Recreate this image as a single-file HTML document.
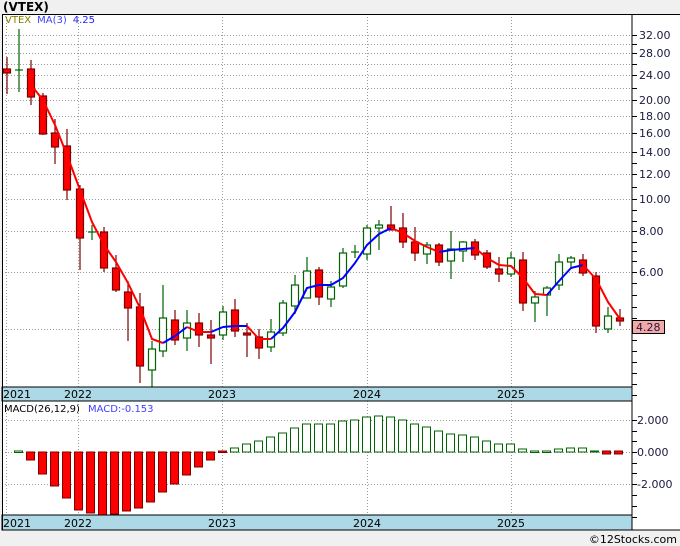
<!DOCTYPE html><html><head><meta charset="utf-8"><style>
body{margin:0;width:680px;height:546px;overflow:hidden;background:#f0f0f0;font-family:"DejaVu Sans","Liberation Sans",sans-serif}
svg{position:absolute;left:0;top:0}
</style></head><body>
<svg width="680" height="546" viewBox="0 0 680 546" xmlns="http://www.w3.org/2000/svg" font-family="DejaVu Sans, Liberation Sans, sans-serif">
<rect x="0" y="0" width="680" height="546" fill="#f0f0f0"/>
<rect x="2" y="14" width="678" height="516" fill="#fff"/>
<text x="3" y="11" font-size="12" font-weight="bold" fill="#000">(VTEX)</text>
<!-- grid main -->
<g stroke="#999" stroke-dasharray="1,2" stroke-width="1">
<line x1="2" y1="35.5" x2="632" y2="35.5"/><line x1="2" y1="44.5" x2="632" y2="44.5"/><line x1="2" y1="53.5" x2="632" y2="53.5"/><line x1="2" y1="64.5" x2="632" y2="64.5"/><line x1="2" y1="75.5" x2="632" y2="75.5"/><line x1="2" y1="88.5" x2="632" y2="88.5"/><line x1="2" y1="100.5" x2="632" y2="100.5"/><line x1="2" y1="116.5" x2="632" y2="116.5"/><line x1="2" y1="133.5" x2="632" y2="133.5"/><line x1="2" y1="152.5" x2="632" y2="152.5"/><line x1="2" y1="174.5" x2="632" y2="174.5"/><line x1="2" y1="199.5" x2="632" y2="199.5"/><line x1="2" y1="231.5" x2="632" y2="231.5"/><line x1="2" y1="272.5" x2="632" y2="272.5"/><line x1="2" y1="329.5" x2="632" y2="329.5"/>
<line x1="6.5" y1="14" x2="6.5" y2="387"/><line x1="78.5" y1="14" x2="78.5" y2="387"/><line x1="222.5" y1="14" x2="222.5" y2="387"/><line x1="367.5" y1="14" x2="367.5" y2="387"/><line x1="511.5" y1="14" x2="511.5" y2="387"/>
<line x1="2" y1="420.5" x2="632" y2="420.5"/><line x1="2" y1="452.5" x2="632" y2="452.5"/><line x1="2" y1="484.5" x2="632" y2="484.5"/>
<line x1="6.5" y1="401" x2="6.5" y2="515"/><line x1="78.5" y1="401" x2="78.5" y2="515"/><line x1="222.5" y1="401" x2="222.5" y2="515"/><line x1="367.5" y1="401" x2="367.5" y2="515"/><line x1="511.5" y1="401" x2="511.5" y2="515"/>
</g>
<!-- candles -->
<g stroke-width="1.2">
<g stroke="#800000"><line x1="7" y1="57" x2="7" y2="94"/><line x1="31" y1="60" x2="31" y2="105"/><line x1="43" y1="93" x2="43" y2="135"/><line x1="55" y1="119" x2="55" y2="164"/><line x1="67" y1="129" x2="67" y2="200"/><line x1="80" y1="185" x2="80" y2="270"/><line x1="104" y1="227" x2="104" y2="272"/><line x1="116" y1="255" x2="116" y2="292"/><line x1="128" y1="281" x2="128" y2="341"/><line x1="140" y1="293" x2="140" y2="383"/><line x1="175" y1="310" x2="175" y2="345"/><line x1="199" y1="313" x2="199" y2="347"/><line x1="211" y1="320" x2="211" y2="364"/><line x1="235" y1="299" x2="235" y2="337"/><line x1="247" y1="323" x2="247" y2="357"/><line x1="259" y1="329" x2="259" y2="359"/><line x1="319" y1="267" x2="319" y2="305"/><line x1="391" y1="206" x2="391" y2="230"/><line x1="403" y1="213" x2="403" y2="248"/><line x1="415" y1="227" x2="415" y2="261"/><line x1="439" y1="243" x2="439" y2="266"/><line x1="475" y1="239" x2="475" y2="260"/><line x1="487" y1="250" x2="487" y2="269"/><line x1="499" y1="257" x2="499" y2="282"/><line x1="523" y1="252" x2="523" y2="311"/><line x1="583" y1="254" x2="583" y2="276"/><line x1="596" y1="272" x2="596" y2="333"/><line x1="620" y1="309" x2="620" y2="326"/></g>
<g fill="#f00" stroke="#800000"><rect x="3.5" y="69" width="7" height="4"/><rect x="27.5" y="69" width="7" height="28"/><rect x="39.5" y="96" width="7" height="38"/><rect x="51.5" y="133" width="7" height="14"/><rect x="63.5" y="146" width="7" height="44"/><rect x="76.5" y="189" width="7" height="49"/><rect x="100.5" y="232" width="7" height="36"/><rect x="112.5" y="268" width="7" height="22"/><rect x="124.5" y="292" width="7" height="16"/><rect x="136.5" y="307" width="7" height="59"/><rect x="171.5" y="320" width="7" height="20"/><rect x="195.5" y="323" width="7" height="12"/><rect x="207.5" y="335" width="7" height="3"/><rect x="231.5" y="310" width="7" height="21"/><rect x="243.5" y="333" width="7" height="2"/><rect x="255.5" y="337" width="7" height="11"/><rect x="315.5" y="270" width="7" height="27"/><rect x="387.5" y="225" width="7" height="5"/><rect x="399.5" y="228" width="7" height="14"/><rect x="411.5" y="242" width="7" height="11"/><rect x="435.5" y="245" width="7" height="17"/><rect x="471.5" y="242" width="7" height="13"/><rect x="483.5" y="253" width="7" height="14"/><rect x="495.5" y="269" width="7" height="5"/><rect x="519.5" y="260" width="7" height="43"/><rect x="579.5" y="260" width="7" height="13"/><rect x="592.5" y="276" width="7" height="50"/><rect x="616.5" y="318" width="7" height="3"/></g>
<g stroke="#006400"><line x1="19" y1="29" x2="19" y2="92"/><line x1="15" y1="70" x2="23" y2="70"/><line x1="92" y1="225" x2="92" y2="240"/><line x1="88" y1="232" x2="96" y2="232"/><line x1="152" y1="341" x2="152" y2="387"/><line x1="163" y1="285" x2="163" y2="357"/><line x1="187" y1="310" x2="187" y2="351"/><line x1="223" y1="306" x2="223" y2="340"/><line x1="271" y1="319" x2="271" y2="352"/><line x1="283" y1="300" x2="283" y2="336"/><line x1="295" y1="275" x2="295" y2="314"/><line x1="307" y1="257" x2="307" y2="298"/><line x1="331" y1="281" x2="331" y2="307"/><line x1="343" y1="248" x2="343" y2="288"/><line x1="355" y1="245" x2="355" y2="258"/><line x1="351" y1="252" x2="359" y2="252"/><line x1="367" y1="225" x2="367" y2="260"/><line x1="379" y1="220" x2="379" y2="250"/><line x1="427" y1="242" x2="427" y2="264"/><line x1="451" y1="231" x2="451" y2="279"/><line x1="463" y1="241" x2="463" y2="262"/><line x1="511" y1="252" x2="511" y2="277"/><line x1="535" y1="291" x2="535" y2="322"/><line x1="547" y1="286" x2="547" y2="316"/><line x1="559" y1="254" x2="559" y2="290"/><line x1="571" y1="256" x2="571" y2="268"/><line x1="608" y1="307" x2="608" y2="333"/></g>
<g fill="#fff" stroke="#006400"><rect x="148.5" y="349" width="7" height="21"/><rect x="159.5" y="318" width="7" height="33"/><rect x="183.5" y="323" width="7" height="15"/><rect x="219.5" y="312" width="7" height="23"/><rect x="267.5" y="332" width="7" height="15"/><rect x="279.5" y="303" width="7" height="30"/><rect x="291.5" y="285" width="7" height="21"/><rect x="303.5" y="271" width="7" height="27"/><rect x="327.5" y="287" width="7" height="12"/><rect x="339.5" y="253" width="7" height="33"/><rect x="363.5" y="228" width="7" height="26"/><rect x="375.5" y="225" width="7" height="3"/><rect x="423.5" y="245" width="7" height="9"/><rect x="447.5" y="249" width="7" height="12"/><rect x="459.5" y="242" width="7" height="9"/><rect x="507.5" y="258" width="7" height="16"/><rect x="531.5" y="297" width="7" height="6"/><rect x="543.5" y="288" width="7" height="7"/><rect x="555.5" y="262" width="7" height="23"/><rect x="567.5" y="258" width="7" height="4"/><rect x="604.5" y="316" width="7" height="13"/></g>
</g>
<!-- MA -->
<g fill="none" stroke-width="2" stroke-linejoin="round">
<polyline stroke="#f00" points="31,85 43,100 55,125 67,155 80,190 92,222 104,245 116,262 128,283 140,308 152,339 163,343"/>
<polyline stroke="#00f" points="163,343 175,336 187,327"/>
<polyline stroke="#f00" points="187,327 199,332 211,332"/>
<polyline stroke="#00f" points="211,332 223,327 235,326 247,326"/>
<polyline stroke="#f00" points="247,326 259,339 271,339"/>
<polyline stroke="#00f" points="271,339 283,328 295,312 307,288 319,285 331,285 343,278 355,263 367,245 379,234 391,228"/>
<polyline stroke="#f00" points="391,228 403,233 415,241 427,247 439,252"/>
<polyline stroke="#00f" points="439,252 451,250 463,249 475,248"/>
<polyline stroke="#f00" points="475,248 487,258 499,265 511,266 523,278 535,294 547,295"/>
<polyline stroke="#00f" points="547,295 559,281 571,268 583,265"/>
<polyline stroke="#f00" points="583,265 596,279 608,302 620,319"/>
</g>
<text x="5" y="23" font-size="10"><tspan fill="#808000">VTEX</tspan><tspan fill="#4040ff" dx="6">MA(3)</tspan><tspan fill="#2020ff" dx="6">4.25</tspan></text>
<!-- MACD bars -->
<g fill="#f00" stroke="#800000"><rect x="26.5" y="452" width="8" height="8"/><rect x="38.5" y="452" width="8" height="22"/><rect x="50.5" y="452" width="8" height="34"/><rect x="62.5" y="452" width="8" height="46"/><rect x="74.5" y="452" width="8" height="58"/><rect x="86.5" y="452" width="8" height="61"/><rect x="98.5" y="452" width="8" height="63"/><rect x="110.5" y="452" width="8" height="62"/><rect x="122.5" y="452" width="8" height="59"/><rect x="134.5" y="452" width="8" height="56"/><rect x="146.5" y="452" width="8" height="50"/><rect x="158.5" y="452" width="8" height="40"/><rect x="170.5" y="452" width="8" height="32"/><rect x="182.5" y="452" width="8" height="23"/><rect x="194.5" y="452" width="8" height="15"/><rect x="206.5" y="452" width="8" height="8"/><rect x="218.5" y="451" width="8" height="1.5"/><rect x="602.5" y="451" width="8" height="3"/><rect x="614.5" y="451" width="8" height="3"/></g>
<g fill="#fff" stroke="#006400"><rect x="14.5" y="451" width="8" height="1.5"/><rect x="230.5" y="448" width="8" height="4"/><rect x="242.5" y="444" width="8" height="8"/><rect x="254.5" y="441" width="8" height="11"/><rect x="266.5" y="437" width="8" height="15"/><rect x="278.5" y="433" width="8" height="19"/><rect x="290.5" y="428" width="8" height="24"/><rect x="302.5" y="424" width="8" height="28"/><rect x="314.5" y="424" width="8" height="28"/><rect x="326.5" y="424" width="8" height="28"/><rect x="338.5" y="421" width="8" height="31"/><rect x="350.5" y="420" width="8" height="32"/><rect x="362.5" y="417" width="8" height="35"/><rect x="374.5" y="416" width="8" height="36"/><rect x="386.5" y="417" width="8" height="35"/><rect x="398.5" y="420" width="8" height="32"/><rect x="410.5" y="424" width="8" height="28"/><rect x="422.5" y="427" width="8" height="25"/><rect x="434.5" y="431" width="8" height="21"/><rect x="446.5" y="434" width="8" height="18"/><rect x="458.5" y="435" width="8" height="17"/><rect x="470.5" y="437" width="8" height="15"/><rect x="482.5" y="441" width="8" height="11"/><rect x="494.5" y="444" width="8" height="8"/><rect x="506.5" y="444" width="8" height="8"/><rect x="518.5" y="449" width="8" height="3"/><rect x="530.5" y="451" width="8" height="1.5"/><rect x="542.5" y="451" width="8" height="1.5"/><rect x="554.5" y="449" width="8" height="3"/><rect x="566.5" y="448" width="8" height="4"/><rect x="578.5" y="448" width="8" height="4"/><rect x="590.5" y="451" width="8" height="1"/></g>
<text x="4" y="412" font-size="10"><tspan fill="#000">MACD(26,12,9)</tspan><tspan fill="#4040ff" dx="8">MACD:-0.153</tspan></text>
<!-- axis bands -->
<rect x="2" y="387" width="630" height="14" fill="#add8e6" stroke="#000"/>
<rect x="2" y="515" width="630" height="15" fill="#add8e6" stroke="#000"/>
<g font-size="11" fill="#000"><text x="3" y="398">2021</text><text x="64" y="398">2022</text><text x="208" y="398">2023</text><text x="353" y="398">2024</text><text x="497" y="398">2025</text>
<text x="3" y="527">2021</text><text x="64" y="527">2022</text><text x="208" y="527">2023</text><text x="353" y="527">2024</text><text x="497" y="527">2025</text></g>
<!-- borders -->
<line x1="2" y1="14.5" x2="680" y2="14.5" stroke="#000"/>
<line x1="2.5" y1="14" x2="2.5" y2="530" stroke="#000"/>
<line x1="632" y1="14" x2="632" y2="530" stroke="#000"/>
<line x1="2" y1="530" x2="680" y2="530" stroke="#000"/>
<!-- right axis ticks -->
<g stroke="#000"><line x1="632" y1="35.5" x2="637" y2="35.5"/><line x1="632" y1="44.5" x2="637" y2="44.5"/><line x1="632" y1="53.5" x2="637" y2="53.5"/><line x1="632" y1="64.5" x2="637" y2="64.5"/><line x1="632" y1="75.5" x2="637" y2="75.5"/><line x1="632" y1="88.5" x2="637" y2="88.5"/><line x1="632" y1="100.5" x2="637" y2="100.5"/><line x1="632" y1="116.5" x2="637" y2="116.5"/><line x1="632" y1="133.5" x2="637" y2="133.5"/><line x1="632" y1="152.5" x2="637" y2="152.5"/><line x1="632" y1="163.5" x2="637" y2="163.5"/><line x1="632" y1="174.5" x2="637" y2="174.5"/><line x1="632" y1="187.5" x2="637" y2="187.5"/><line x1="632" y1="199.5" x2="637" y2="199.5"/><line x1="632" y1="210.5" x2="637" y2="210.5"/><line x1="632" y1="221.5" x2="637" y2="221.5"/><line x1="632" y1="231.5" x2="637" y2="231.5"/><line x1="632" y1="242.5" x2="637" y2="242.5"/><line x1="632" y1="251.5" x2="637" y2="251.5"/><line x1="632" y1="261.5" x2="637" y2="261.5"/><line x1="632" y1="272.5" x2="637" y2="272.5"/><line x1="632" y1="283.5" x2="637" y2="283.5"/><line x1="632" y1="295.5" x2="637" y2="295.5"/><line x1="632" y1="307.5" x2="637" y2="307.5"/><line x1="632" y1="318.5" x2="637" y2="318.5"/><line x1="632" y1="340.5" x2="637" y2="340.5"/><line x1="632" y1="351.5" x2="637" y2="351.5"/><line x1="632" y1="362.5" x2="637" y2="362.5"/><line x1="632" y1="373.5" x2="637" y2="373.5"/><line x1="632" y1="384.5" x2="637" y2="384.5"/><line x1="632" y1="395.5" x2="637" y2="395.5"/>
<line x1="632" y1="420.5" x2="637" y2="420.5"/><line x1="632" y1="431.5" x2="637" y2="431.5"/><line x1="632" y1="441.5" x2="637" y2="441.5"/><line x1="632" y1="452.5" x2="637" y2="452.5"/><line x1="632" y1="463.5" x2="637" y2="463.5"/><line x1="632" y1="473.5" x2="637" y2="473.5"/><line x1="632" y1="484.5" x2="637" y2="484.5"/><line x1="632" y1="495.5" x2="637" y2="495.5"/><line x1="632" y1="506.5" x2="637" y2="506.5"/><line x1="632" y1="517.5" x2="637" y2="517.5"/></g>
<g font-size="11" fill="#1a1a40"><text x="639" y="39">32.00</text><text x="639" y="57">28.00</text><text x="639" y="79">24.00</text><text x="639" y="104">20.00</text><text x="639" y="120">18.00</text><text x="639" y="137">16.00</text><text x="639" y="156">14.00</text><text x="639" y="178">12.00</text><text x="639" y="203">10.00</text><text x="639" y="235">8.00</text><text x="639" y="276">6.00</text>
<text x="637" y="424">2.000</text><text x="637" y="456">0.000</text><text x="637" y="488">-2.000</text></g>
<rect x="632.5" y="320.5" width="32" height="13" fill="#f4a8a8" stroke="#000"/>
<text x="636" y="331" font-size="11" fill="#1a1a40">4.28</text>
<text x="677" y="543" font-size="11" fill="#000" text-anchor="end">©12Stocks.com</text>
</svg>
</body></html>
